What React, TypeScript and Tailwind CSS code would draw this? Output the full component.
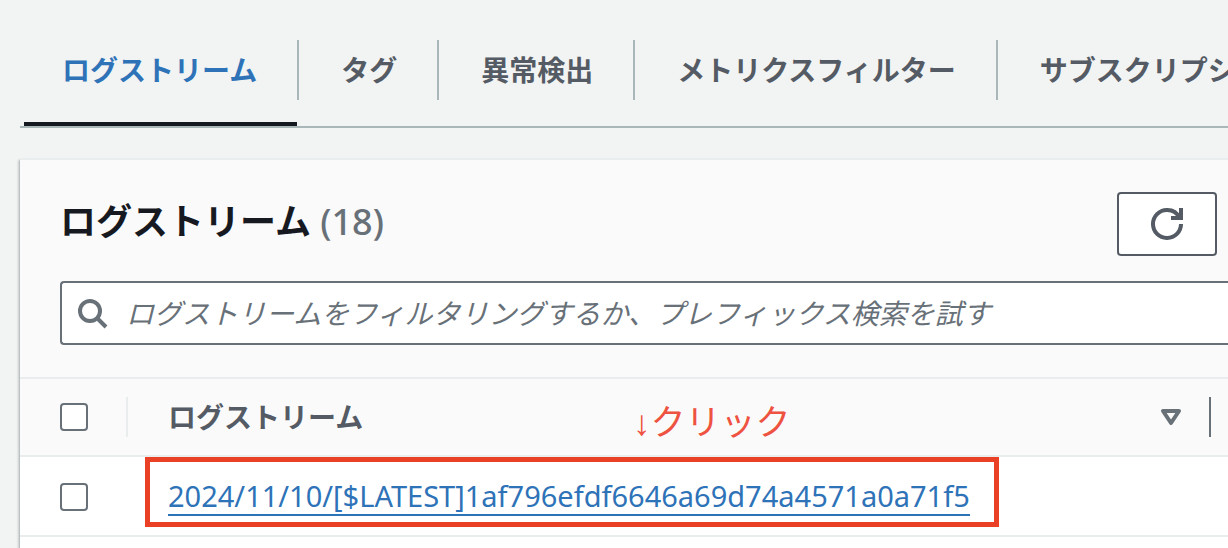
import React from 'react';

interface LogStream { id: string; name: string; }

const TABS = ['ログストリーム', 'タグ', '異常検出', 'メトリクスフィルター', 'サブスクリプションフィルター'];

const STREAMS: LogStream[] = [
  { id: 'stream-1', name: '2024/11/10/[$LATEST]1af796efdf6646a69d74a4571a0a71f5' },
];

const SearchIcon = () => (
  <svg viewBox="0 0 16 16" className="size-8 shrink-0" fill="none" stroke="#687078" strokeWidth="2" aria-hidden="true">
    <circle cx="7" cy="7" r="5" />
    <path d="m15 15-4.5-4.5" />
  </svg>
);

const RefreshIcon = () => (
  <svg viewBox="0 0 16 16" className="size-8" fill="none" stroke="#545b64" strokeWidth="2" aria-hidden="true">
    <path d="M10 5h5V0" />
    <path d="M15 8a6.957 6.957 0 0 1-7 7 6.957 6.957 0 0 1-7-7 6.957 6.957 0 0 1 7-7 6.87 6.87 0 0 1 6.3 4" />
  </svg>
);

const SortIcon = () => (
  <svg viewBox="0 0 16 16" className="size-8" fill="none" stroke="#687078" strokeWidth="2" strokeLinejoin="round" aria-hidden="true">
    <path d="M4 5h8l-4 6-4-6z" />
  </svg>
);

const Checkbox: React.FC<{ label: string }> = ({ label }) => (
  <input
    type="checkbox"
    aria-label={label}
    className="block size-7 shrink-0 appearance-none rounded-sm border-2 border-[#687078] bg-white checked:bg-[#2e73b8]"
  />
);

const Tabs = () => (
  <nav className="ml-5 overflow-hidden border-b-2 border-[#aab7b8] pt-10">
    <ul className="ml-1 flex items-start">
      {TABS.map((tab, i) => (
        <li key={tab} className="flex shrink-0 items-start">
          <a
            href="#"
            aria-current={i === 0 ? 'page' : undefined}
            className={`block whitespace-nowrap border-b-4 pb-[22px] font-bold leading-[60px] ${i === 0 ? 'border-[#16191f] pl-[38px] pr-10 text-[#2e73b8]' : 'border-transparent pl-[42px] pr-10 text-[#545b64]'}`}
          >
            {tab}
          </a>
          <span className="h-[60px] w-0.5 bg-[#aab7b8]" />
        </li>
      ))}
    </ul>
  </nav>
);

const StreamTable = () => (
  <table className="w-full table-fixed border-separate border-spacing-0 text-left">
    <thead className="bg-[#fafafa]">
      <tr>
        <th className="w-[108px] border-y-2 border-[#eaeded] py-[18px] pl-10">
          <div className="flex h-10 items-center justify-between border-r-2 border-[#eaeded]">
            <Checkbox label="すべて選択" />
          </div>
        </th>
        <th className="relative border-y-2 border-[#eaeded] py-[18px] pl-10">
          <div className="flex h-10 items-center justify-between border-r-2 border-[#687078] pr-[22px] leading-10 text-[#545b64]">
            ログストリーム
            <button type="button" aria-label="並べ替え"><SortIcon /></button>
          </div>
          <span className="absolute left-[505px] top-6 whitespace-nowrap font-['Liberation_Sans','Noto_Sans_CJK_JP',sans-serif] text-[35px] font-normal leading-10 text-[#ee5240]">
            ↓クリック
          </span>
        </th>
        <th className="w-[17px] border-y-2 border-[#eaeded]" />
      </tr>
    </thead>
    <tbody>
      {STREAMS.map(stream => (
        <tr key={stream.id}>
          <td className="border-b-2 border-[#eaeded] pb-6 pl-10 pt-[26px]"><Checkbox label={stream.name} /></td>
          <td className="relative border-b-2 border-[#eaeded] pl-10">
            <a href="#" className="inline-block whitespace-nowrap border-b-2 border-[#2e73b8] text-[29px] leading-9 text-[#2e73b8]">{stream.name}</a>
            <span className="pointer-events-none absolute left-[17px] top-0 h-[70px] w-[854px] border-[5px] border-[#ea4025]" />
          </td>
          <td className="border-b-2 border-[#eaeded]" />
        </tr>
      ))}
    </tbody>
  </table>
);

export default function App() {
  return (
    <div className="flex min-h-screen flex-col overflow-hidden bg-[#f2f3f3] font-['Noto_Sans','Noto_Sans_CJK_JP',sans-serif] text-[28px]">
      <Tabs />
      <main className="ml-5 mt-[30px] flex-1 border-t-2 border-[#eaeded] bg-white shadow-[0_2px_2px_rgba(0,28,36,0.3),-2px_2px_2px_rgba(0,28,36,0.15)]">
        <div className="bg-[#fafafa] pb-8 pl-10 pt-8">
          <div className="flex items-start justify-between pr-[11px]">
            <h1 className="text-[36px] font-bold leading-[60px] text-[#16191f]">
              ログストリーム <span className="font-medium text-[#687078]">(18)</span>
            </h1>
            <button type="button" aria-label="更新" className="flex h-16 w-[100px] items-center justify-center rounded-sm border-2 border-[#545b64] bg-white">
              <RefreshIcon />
            </button>
          </div>
          <label className="mt-[25px] flex h-16 items-center rounded-l-sm border-2 border-r-0 border-[#687078] bg-white pl-3.5">
            <SearchIcon />
            <input
              type="search"
              aria-label="ログストリームをフィルター"
              placeholder="ログストリームをフィルタリングするか、プレフィックス検索を試す"
              className="ml-[18px] h-full min-w-0 flex-1 outline-none placeholder:italic placeholder:text-[#687078]"
            />
          </label>
        </div>
        <StreamTable />
      </main>
    </div>
  );
}
